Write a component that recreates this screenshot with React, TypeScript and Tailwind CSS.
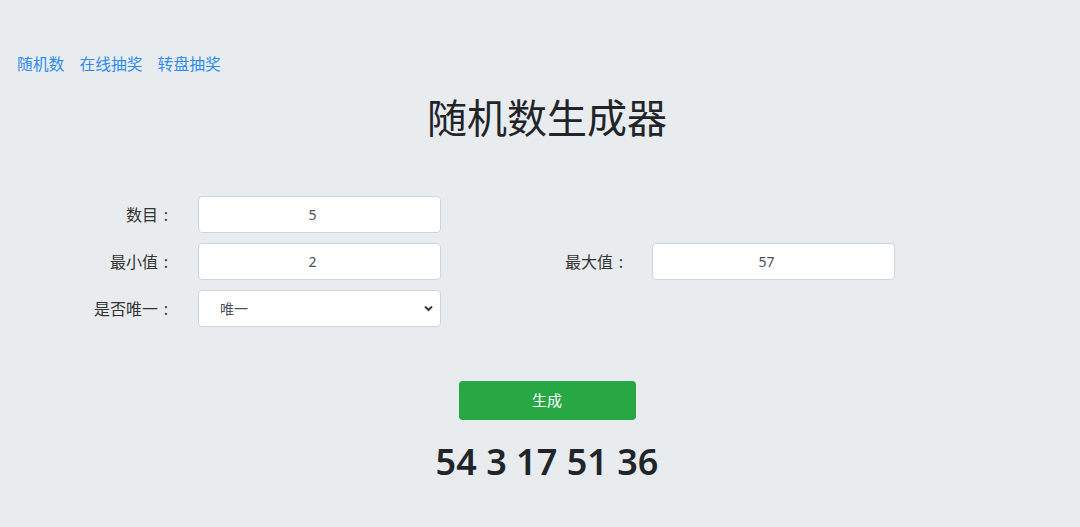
import React from "react";

const font = { fontFamily: '"Noto Sans", "Noto Sans CJK SC", sans-serif' };

function Label({ text }: { text: string }) {
  return (
    <>
      {text}
      <span className="inline-block w-[16px] text-center">:</span>
    </>
  );
}

function Row({ label, children }: { label: string; children: React.ReactNode }) {
  return (
    <div className="flex items-center">
      <div className="w-[174px] text-right text-[16px] text-[#333]">
        <Label text={label} />
      </div>
      <div className="ml-[24px]">{children}</div>
    </div>
  );
}

function Input({ value }: { value: string }) {
  return (
    <input
      readOnly
      value={value}
      className="w-[243px] h-[37px] bg-white border border-[#ced4da] rounded-[4px] text-center pr-[14px] text-[14px] text-[#495057] outline-none"
    />
  );
}

export default function App() {
  return (
    <div className="w-[1080px] h-[527px] bg-[#e9ecef] overflow-hidden" style={font}>
      <div className="pt-[52px] pl-[17px] flex gap-[15px] text-[15.8px] text-[#2d8cf0] leading-[24px]">
        <a>随机数</a>
        <a>在线抽奖</a>
        <a>转盘抽奖</a>
      </div>
      <h1 className="mt-[14px] pl-[14px] text-center text-[40px] leading-[56px] text-[#212529] font-normal">
        随机数生成器
      </h1>
      <div className="mt-[50px] flex flex-col gap-[10px]">
        <Row label="数目">
          <Input value="5" />
        </Row>
        <div className="flex items-center">
          <Row label="最小值">
            <Input value="2" />
          </Row>
          <div className="ml-[124px] text-[16px] text-[#333]">
            <Label text="最大值" />
          </div>
          <div className="ml-[23px]">
            <Input value="57" />
          </div>
        </div>
        <Row label="是否唯一">
          <div className="relative w-[243px] h-[37px] bg-white border border-[#ced4da] rounded-[4px] flex items-center pl-[21px] text-[14px] text-[#495057]">
            唯一
            <svg className="absolute right-[7px] top-[14px]" width="9" height="7" viewBox="0 0 9 7">
              <path d="M1 1.5 L4.5 5 L8 1.5" fill="none" stroke="#343a40" strokeWidth="2" />
            </svg>
          </div>
        </Row>
      </div>
      <div className="mt-[54px] flex justify-center pl-[14px]">
        <button className="w-[177px] h-[39px] bg-[#28a745] rounded-[4px] text-white text-[15px]">生成</button>
      </div>
      <div className="mt-[18px] pl-[14px] text-center text-[36px] leading-[48px] font-semibold text-[#212529]">
        54 3 17 51 36
      </div>
    </div>
  );
}
